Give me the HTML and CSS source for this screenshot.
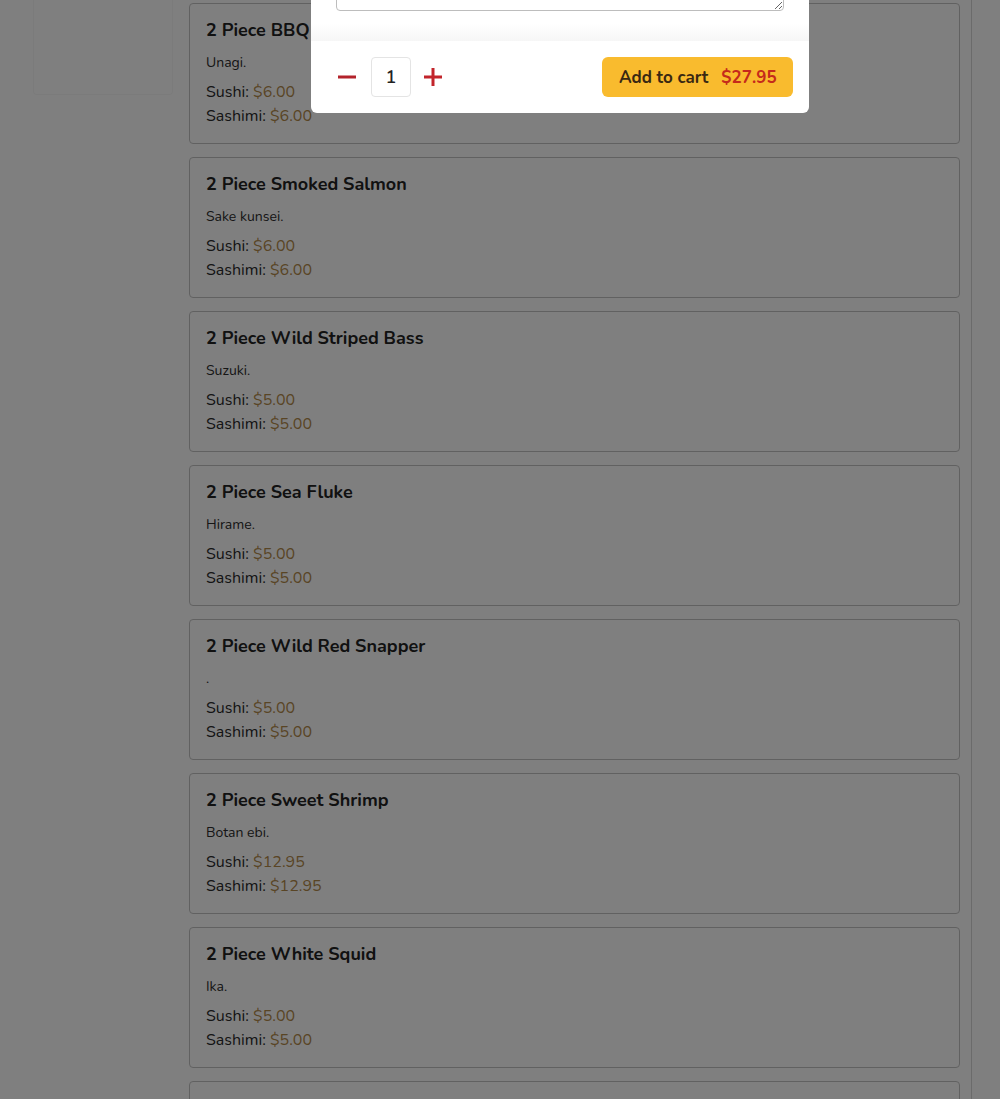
FILE: index.html
```html
<!DOCTYPE html>
<html>
<head>
<meta charset="utf-8">
<link rel="stylesheet" href="styles.css">
</head>
<body>
<div class="page">
  <aside class="sidebar"><div class="side-box"></div></aside>
  <main class="menu">
    <div class="card">
      <h3 class="title">2 Piece BBQ Eel</h3>
      <p class="desc">Unagi.</p>
      <p class="price">Sushi: <span>$6.00</span></p>
      <p class="price">Sashimi: <span>$6.00</span></p>
    </div>
    <div class="card">
      <h3 class="title">2 Piece Smoked Salmon</h3>
      <p class="desc">Sake kunsei.</p>
      <p class="price">Sushi: <span>$6.00</span></p>
      <p class="price">Sashimi: <span>$6.00</span></p>
    </div>
    <div class="card">
      <h3 class="title">2 Piece Wild Striped Bass</h3>
      <p class="desc">Suzuki.</p>
      <p class="price">Sushi: <span>$5.00</span></p>
      <p class="price">Sashimi: <span>$5.00</span></p>
    </div>
    <div class="card">
      <h3 class="title">2 Piece Sea Fluke</h3>
      <p class="desc">Hirame.</p>
      <p class="price">Sushi: <span>$5.00</span></p>
      <p class="price">Sashimi: <span>$5.00</span></p>
    </div>
    <div class="card">
      <h3 class="title">2 Piece Wild Red Snapper</h3>
      <p class="desc">.</p>
      <p class="price">Sushi: <span>$5.00</span></p>
      <p class="price">Sashimi: <span>$5.00</span></p>
    </div>
    <div class="card">
      <h3 class="title">2 Piece Sweet Shrimp</h3>
      <p class="desc">Botan ebi.</p>
      <p class="price">Sushi: <span>$12.95</span></p>
      <p class="price">Sashimi: <span>$12.95</span></p>
    </div>
    <div class="card">
      <h3 class="title">2 Piece White Squid</h3>
      <p class="desc">Ika.</p>
      <p class="price">Sushi: <span>$5.00</span></p>
      <p class="price">Sashimi: <span>$5.00</span></p>
    </div>
    <div class="card card-last"></div>
  </main>
</div>

<div class="overlay"></div>

<div class="modal">
  <div class="modal-body">
    <textarea class="notes"></textarea>
  </div>
  <div class="modal-footer">
    <div class="qty">
      <button class="qty-btn" aria-label="Decrease">
        <svg width="18" height="18" viewBox="0 0 18 18"><path d="M0 9H18" stroke="#b3232b" stroke-width="3"/></svg>
      </button>
      <div class="qty-box">1</div>
      <button class="qty-btn" aria-label="Increase">
        <svg width="18" height="18" viewBox="0 0 18 18"><path d="M0 9H18M9 0V18" stroke="#c2242b" stroke-width="3"/></svg>
      </button>
    </div>
    <button class="add-btn"><span class="add-label">Add to cart</span><span class="add-price">$27.95</span></button>
  </div>
</div>
</body>
</html>
```

FILE: styles.css
```css
* { box-sizing: border-box; }

html, body {
  margin: 0;
  padding: 0;
  height: 100%;
  overflow: hidden;
}

body {
  font-family: "Nunito", "Lato", "Open Sans", sans-serif;
  background: #fff;
  color: #282828;
}

.page {
  display: flex;
  align-items: flex-start;
  height: 100%;
}

.sidebar {
  width: 189px;
  flex: none;
  padding-left: 33px;
}

.side-box {
  width: 140px;
  height: 95px;
  border: 1px solid #f6f6f6;
  border-top: none;
  border-radius: 0 0 4px 4px;
}

.menu {
  width: 783px;
  flex: none;
  padding: 3px 11px 0 0;
  border-right: 1px solid #d6d6d6;
  min-height: 100%;
  display: flex;
  flex-direction: column;
  gap: 13px;
}

.card {
  border: 1px solid #c2c2c2;
  border-radius: 4px;
  padding: 15px 16px 15px 16px;
  height: 141px;
  flex: none;
}

.title {
  margin: 0;
  font-size: 18px;
  line-height: 22px;
  font-weight: 700;
  color: #222;
}

.desc {
  margin: 12px 0 0;
  font-size: 14px;
  line-height: 20px;
  color: #2c2c2c;
}

.desc + .price { margin-top: 7px; }

.price {
  margin: 0;
  font-size: 16px;
  line-height: 24px;
  color: #2a2a2a;
}

.price span { color: #b38a4a; }

.overlay {
  position: fixed;
  inset: 0;
  background: rgba(0, 0, 0, 0.5);
}

.modal {
  position: fixed;
  left: 311px;
  top: -60px;
  width: 498px;
  background: #fff;
  border-radius: 0 0 6px 6px;
  overflow: hidden;
}

.modal-body {
  padding: 0 25px;
  height: 101px;
  background: linear-gradient(to bottom, #fff 0, #fff 84px, #f6f6f6 101px);
}

.notes {
  display: block;
  width: 448px;
  height: 71px;
  border: 1px solid #bdbdbd;
  border-radius: 4px;
  resize: vertical;
  background: #fff;
}

.modal-footer {
  display: flex;
  align-items: center;
  justify-content: space-between;
  padding: 16px 16px 16px 27px;
}

.qty {
  display: flex;
  align-items: center;
  gap: 15px;
}

.qty-btn {
  border: none;
  background: none;
  padding: 0;
  width: 18px;
  height: 18px;
  display: flex;
  cursor: pointer;
}

.qty-box {
  width: 40px;
  height: 40px;
  border: 1px solid #e4e4e4;
  border-radius: 4px;
  display: flex;
  align-items: center;
  justify-content: center;
  font-size: 18px;
  font-weight: 600;
  color: #222;
}

.qty-box + .qty-btn { margin-left: -2px; }

.add-btn {
  display: flex;
  align-items: center;
  gap: 13px;
  height: 40px;
  width: 191px;
  padding: 0 16px 0 17px;
  border: none;
  border-radius: 6px;
  background: #f9bb2e;
  font-family: inherit;
  font-size: 17px;
  font-weight: 700;
  white-space: nowrap;
  cursor: pointer;
}

.add-label { color: #3a2812; }
.add-price { color: #c52a1b; }
```
